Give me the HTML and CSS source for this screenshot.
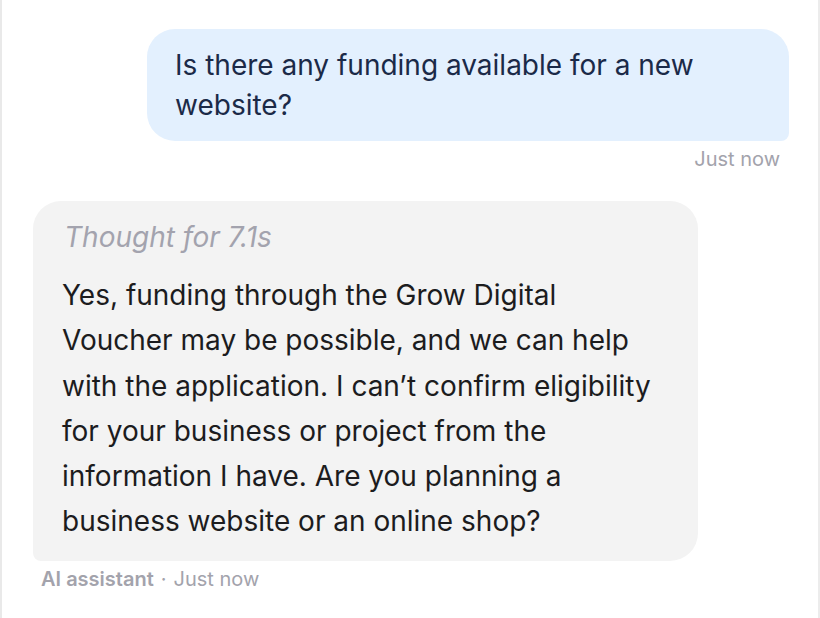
FILE: index.html
```html
<!DOCTYPE html>
<html>
<head>
<meta charset="utf-8">
<link rel="stylesheet" href="styles.css">
</head>
<body>
<div class="chat">
  <div class="msg user">
    <div class="bubble user-bubble">Is there any funding available for a new website?</div>
    <div class="meta user-meta">Just now</div>
  </div>
  <div class="msg bot">
    <div class="bubble bot-bubble">
      <div class="thought">Thought for 7.1s</div>
      <div class="answer">Yes, funding through the Grow Digital Voucher may be possible, and we can help with the application. I can’t confirm eligibility for your business or project from the information I have. Are you planning a business website or an online shop?</div>
    </div>
    <div class="meta bot-meta"><span class="who">AI assistant</span><span class="dot">·</span><span>Just now</span></div>
  </div>
</div>
</body>
</html>
```
FILE: styles.css
```css
* { box-sizing: border-box; }
html, body { margin: 0; padding: 0; background: #fff; }
body {
  font-family: Inter, "Noto Sans", sans-serif;
  width: 820px;
  height: 618px;
  overflow: hidden;
}
.chat {
  height: 618px;
  border-left: 2px solid #e9e9e9;
  border-right: 2px solid #ececec;
  padding: 29px 29px 0 31px;
  display: flex;
  flex-direction: column;
}
.msg { display: flex; flex-direction: column; }
.user { align-items: flex-end; }
.bubble { font-size: 28px; }
.user-bubble {
  width: 642px;
  background: #e3f0fe;
  color: #1b2a48;
  line-height: 40px;
  padding: 16px 40px 16px 28px;
  border-radius: 28px 28px 8px 28px;
}
.meta {
  font-size: 20px;
  color: #a3a3ac;
}
.user-meta {
  margin-top: 7px;
  padding-right: 9px;
  line-height: 22px;
}
.bot { align-items: flex-start; margin-top: 31px; }
.bot-bubble {
  width: 665px;
  background: #f3f3f3;
  border-radius: 28px 28px 28px 8px;
  padding: 16px 30px 16px 29px;
  color: #1c1c1e;
}
.thought {
  font-style: italic;
  color: #a3a3ae;
  line-height: 40px;
  padding-left: 2px;
}
.answer {
  margin-top: 16px;
  line-height: 45.3px;
}
.bot-meta {
  margin-top: 7px;
  padding-left: 8px;
  line-height: 22px;
  display: flex;
  gap: 7px;
}
.who { font-weight: 600; color: #a3a3ac; }
.dot { color: #a3a3ac; }
```
